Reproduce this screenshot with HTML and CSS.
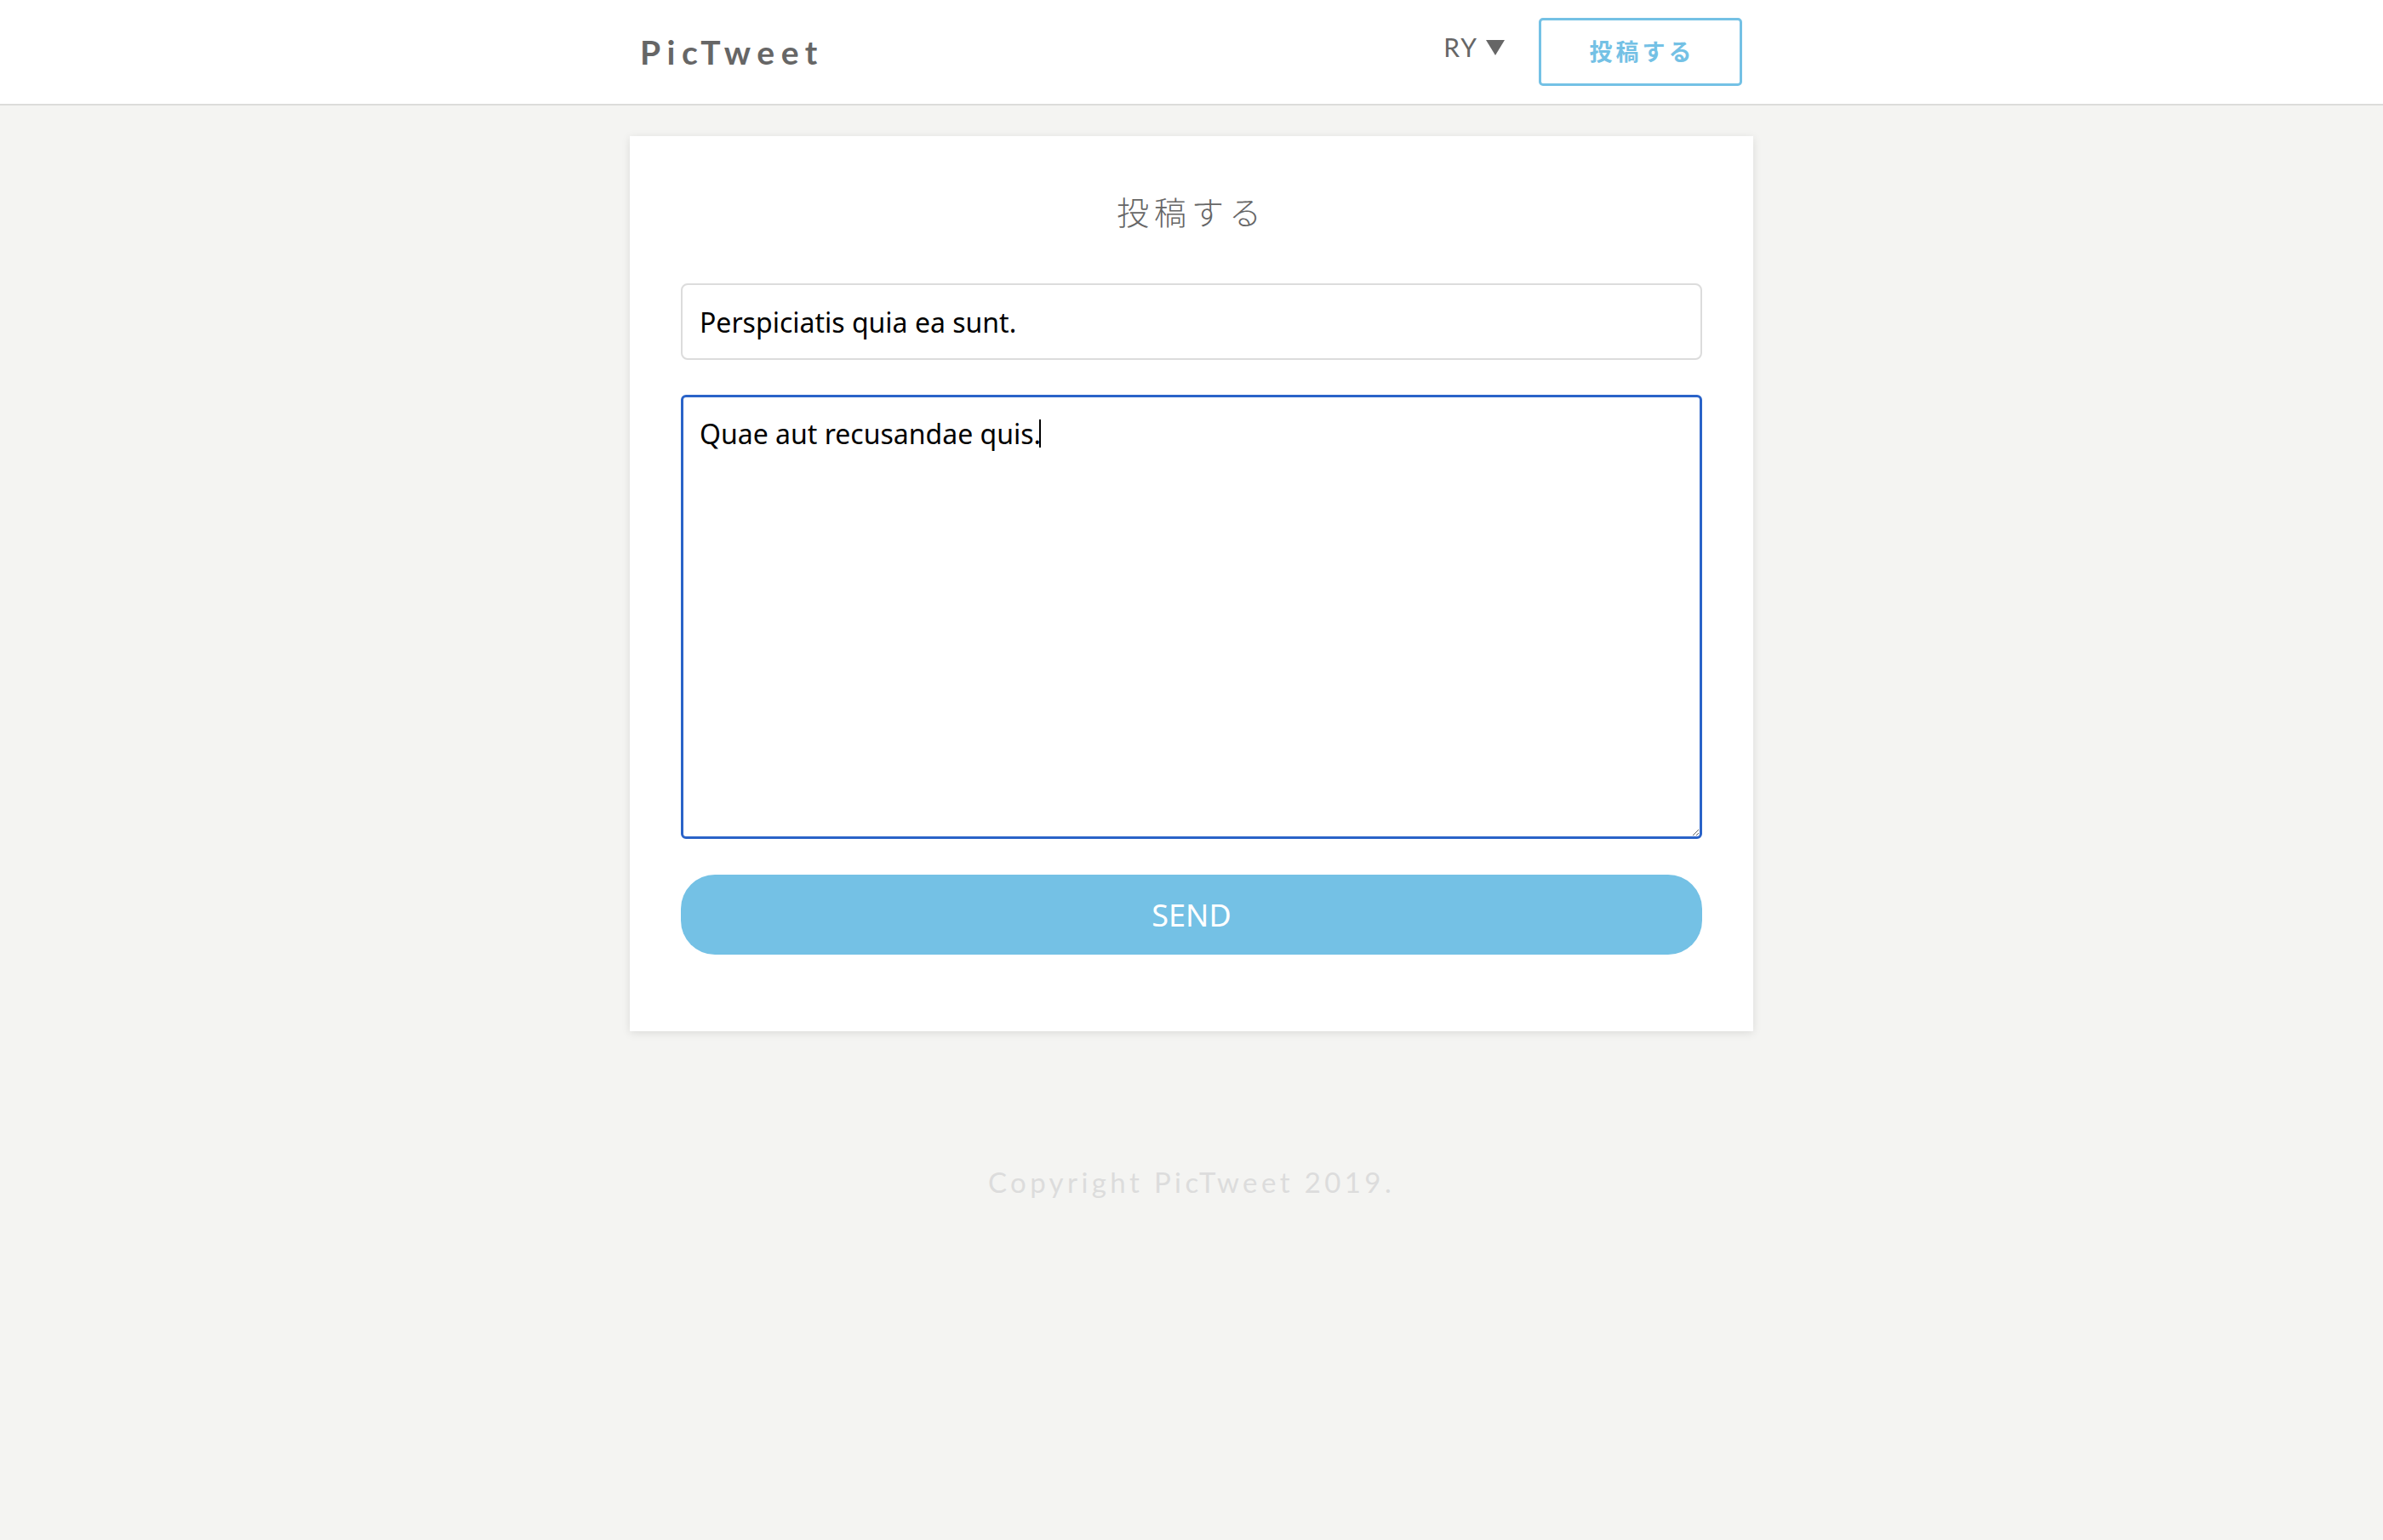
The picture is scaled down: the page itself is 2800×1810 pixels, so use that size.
FILE: index.html
```html
<!DOCTYPE html>
<html lang="ja">
<head>
<meta charset="utf-8">
<title>PicTweet</title>
<link rel="stylesheet" href="styles.css">
</head>
<body>
<header class="header">
  <div class="header-inner">
    <div class="logo">PicTweet</div>
    <nav class="nav">
      <span class="user">RY<span class="tri"></span></span>
      <a class="post-btn" href="#">投稿する</a>
    </nav>
  </div>
</header>
<main class="main">
  <section class="card">
    <h2 class="card-title">投稿する</h2>
    <form class="form">
      <input class="field" type="text" value="Perspiciatis quia ea sunt.">
      <div class="area-wrap">
        <textarea id="body" class="area">Quae aut recusandae quis.</textarea>
        <span class="caret"></span>
      </div>
      <button class="send" type="button">SEND</button>
    </form>
  </section>
</main>
<footer class="footer">Copyright PicTweet 2019.</footer>
<script src="app.js"></script>
</body>
</html>
```
FILE: styles.css
```css
* { box-sizing: border-box; }
html, body { margin: 0; padding: 0; }
body {
  background: #f4f4f2;
  font-family: Lato, "Noto Sans", "Noto Sans CJK JP", sans-serif;
  color: #666;
  min-height: 1810px;
}
.header {
  background: #fff;
  height: 124px;
  border-bottom: 2px solid #dcdcda;
}
.header-inner {
  width: 1300px;
  margin: 0 auto;
  height: 122px;
  display: flex;
  align-items: center;
  justify-content: space-between;
}
.logo {
  font-family: Lato, "Noto Sans", sans-serif;
  font-weight: 700;
  font-size: 39px;
  letter-spacing: 7.5px;
  color: #666;
  padding-top: 0;
  padding-left: 2px;
}
.nav {
  display: flex;
  align-items: center;
  gap: 40px;
  padding-right: 3px;
}
.user {
  font-family: Lato, "Noto Sans", sans-serif;
  font-size: 30px;
  color: #666;
  letter-spacing: 2px;
  margin-top: -12px;
  display: flex;
  align-items: center;
  gap: 9px;
}
.tri {
  display: inline-block;
  width: 0;
  height: 0;
  border-left: 11px solid transparent;
  border-right: 11px solid transparent;
  border-top: 18px solid #666;
  margin-top: 2px;
}
.post-btn {
  display: flex;
  align-items: center;
  justify-content: center;
  width: 239px;
  height: 80px;
  border: 3px solid #74c1e5;
  border-radius: 5px;
  color: #74c1e5;
  text-decoration: none;
  font-family: "Noto Sans CJK JP", sans-serif;
  font-weight: 700;
  font-size: 27px;
  letter-spacing: 4px;
  padding-left: 4px;
  padding-bottom: 4px;
}
.main {
  display: flex;
  justify-content: center;
  padding-top: 36px;
}
.card {
  width: 1320px;
  background: #fff;
  box-shadow: 0 2px 10px rgba(0, 0, 0, 0.1);
  padding: 66px 60px 90px;
}
.card-title {
  margin: 0;
  text-align: center;
  font-family: "Noto Sans CJK JP", sans-serif;
  font-weight: 300;
  font-size: 38px;
  line-height: 44px;
  letter-spacing: 6px;
  color: #666;
}
.form {
  display: flex;
  flex-direction: column;
  margin-top: 63px;
}
.field {
  height: 90px;
  border: 2px solid #dcdcdc;
  border-radius: 8px;
  padding: 0 20px;
  font-family: "Noto Sans", "Noto Sans CJK JP", sans-serif;
  font-size: 32px;
  color: #000;
  outline: none;
}
.area-wrap {
  position: relative;
  margin-top: 41px;
  display: flex;
}
.area {
  flex: 1;
  height: 522px;
  border: 3px solid #2a63c8;
  border-radius: 6px;
  padding: 22px 19px;
  font-family: "Noto Sans", "Noto Sans CJK JP", sans-serif;
  font-size: 32px;
  line-height: 42px;
  color: #000;
  outline: none;
  resize: vertical;
  caret-color: transparent;
}
.caret {
  position: absolute;
  left: 421px;
  top: 29px;
  width: 2px;
  height: 33px;
  background: #000;
}
.send {
  margin-top: 42px;
  height: 94px;
  border: none;
  border-radius: 40px;
  background: #74c1e5;
  color: #fff;
  font-family: "Noto Sans", sans-serif;
  font-size: 36px;
  cursor: pointer;
}
.footer {
  text-align: center;
  margin-top: 157px;
  font-family: Lato, "Noto Sans", sans-serif;
  font-size: 33px;
  letter-spacing: 4.4px;
  color: #dcdcdc;
}
```
FILE: app.js
```js
var t = document.getElementById('body');
t.focus();
t.setSelectionRange(t.value.length, t.value.length);
```
